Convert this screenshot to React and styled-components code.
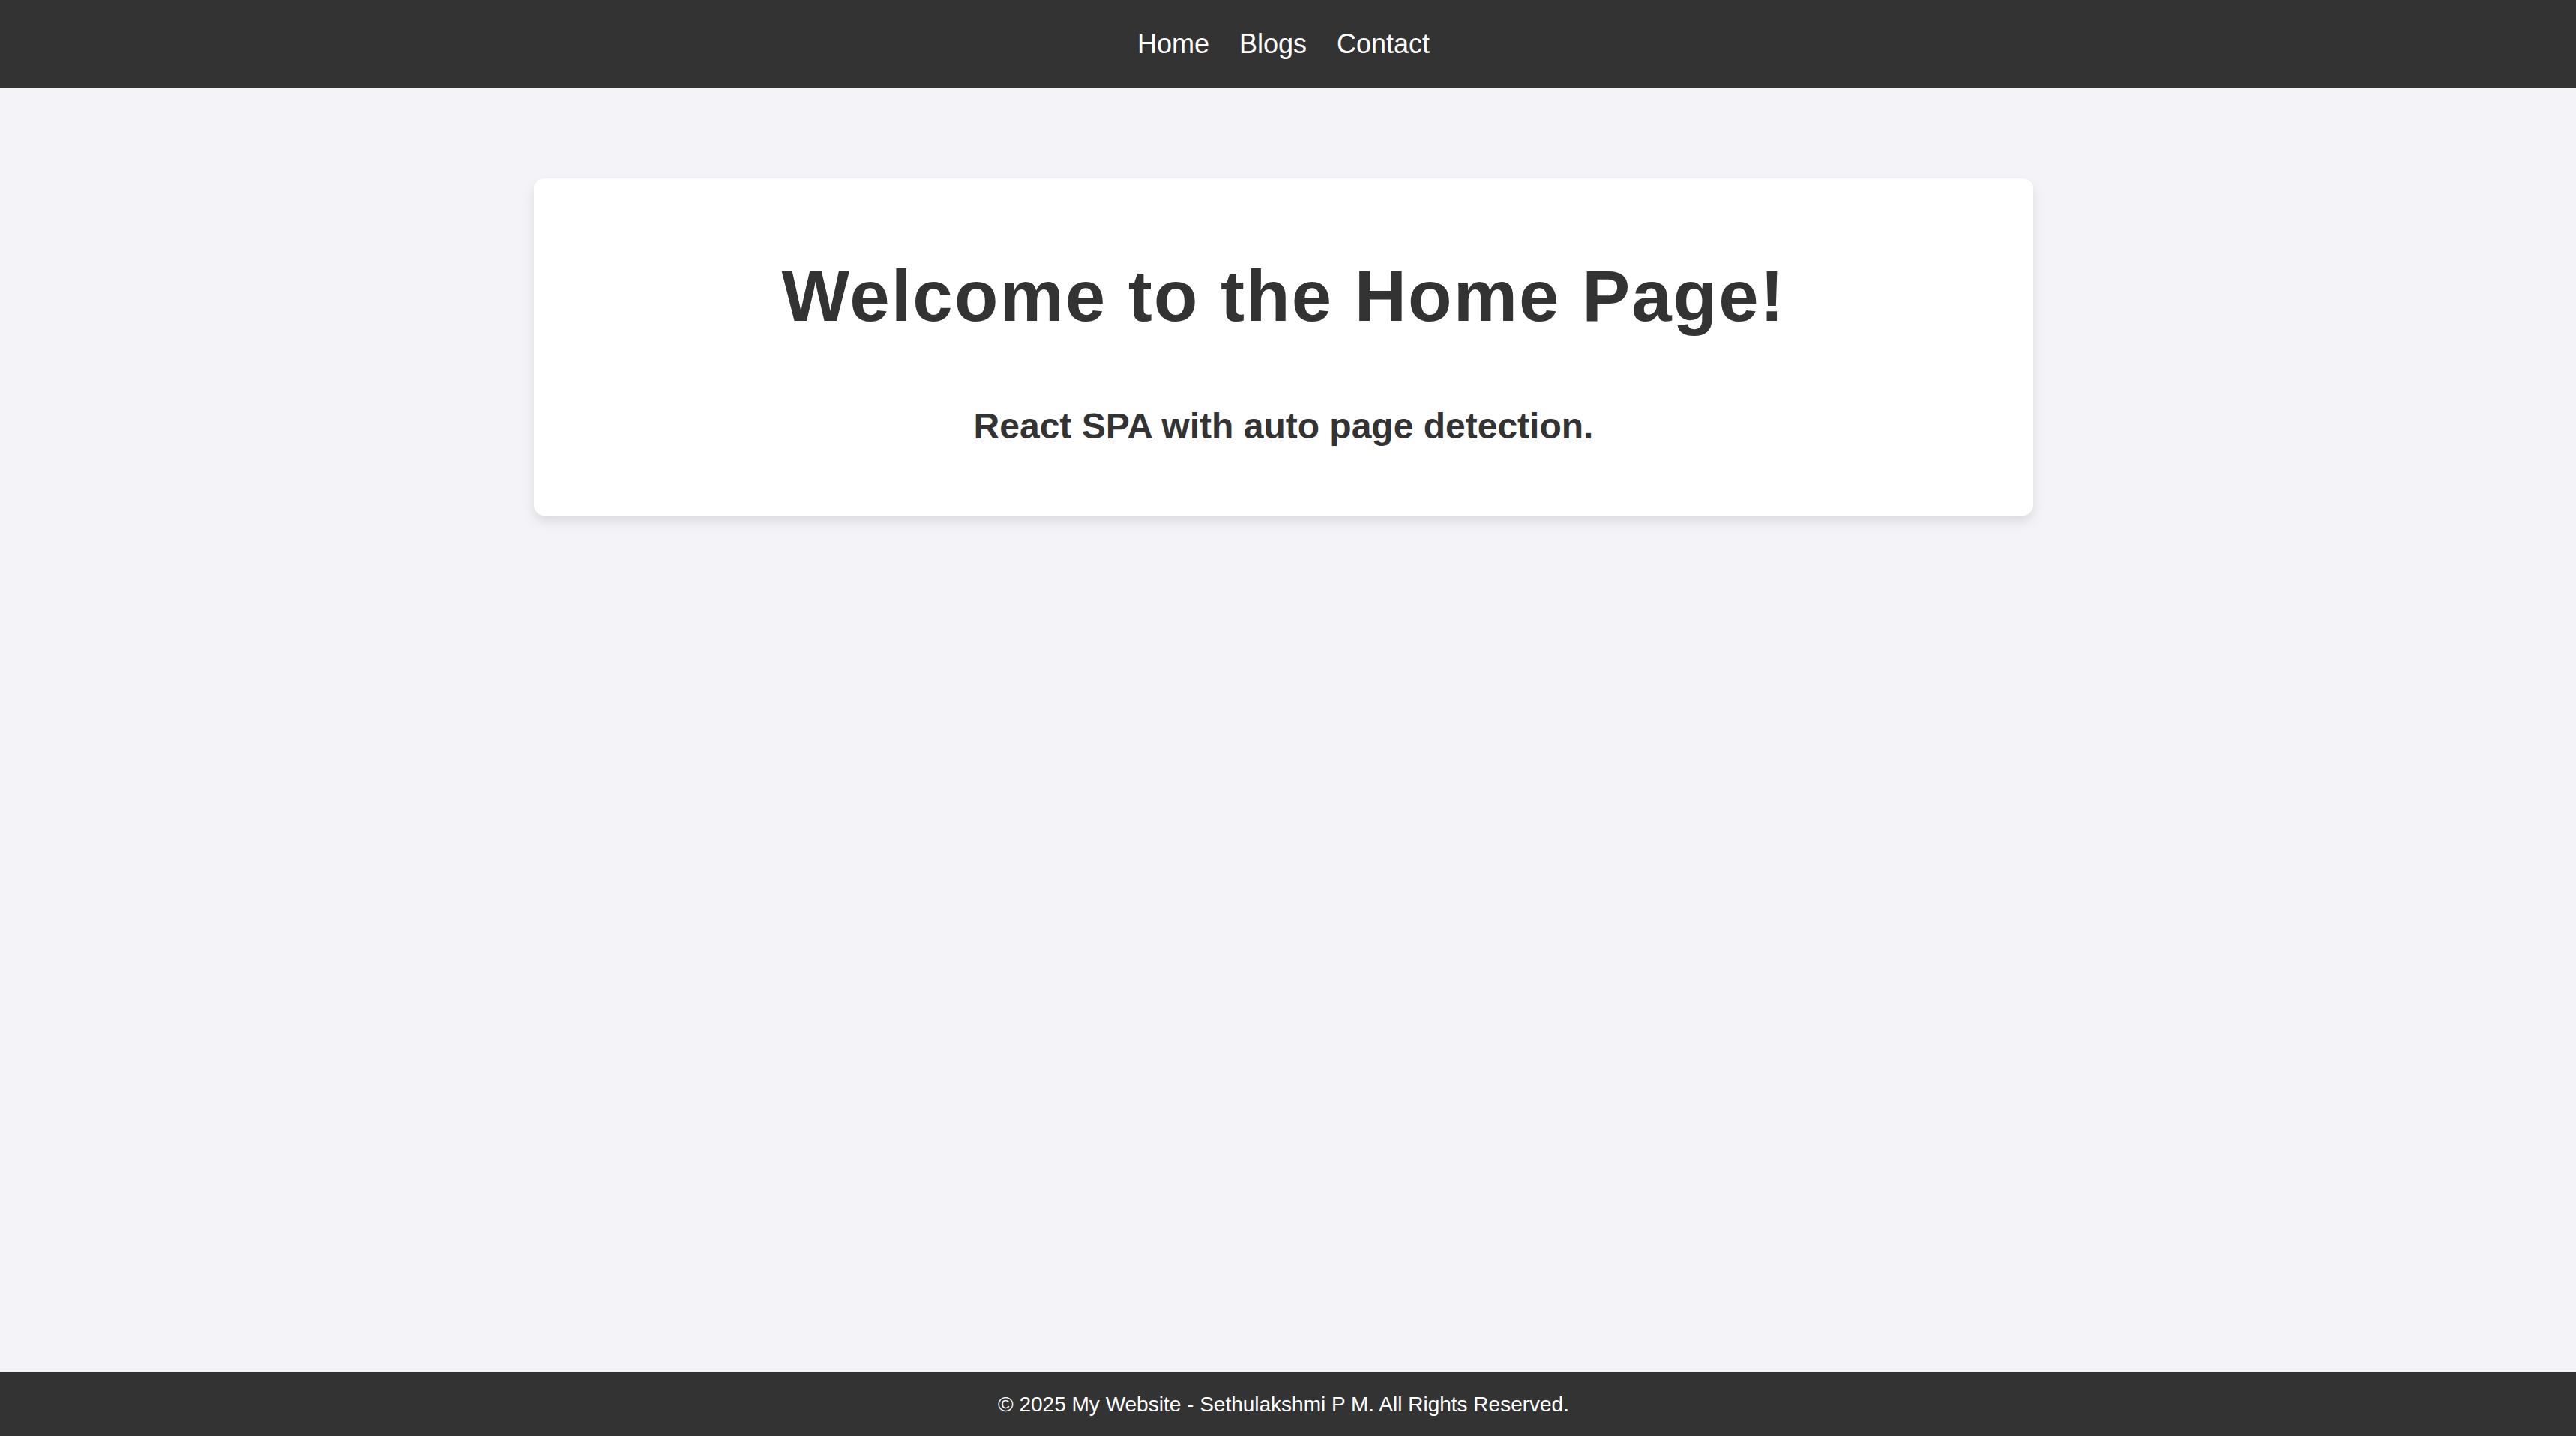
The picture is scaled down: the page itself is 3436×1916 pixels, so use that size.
import React from "react";
import styled, {createGlobalStyle} from "styled-components";

const GlobalStyle = createGlobalStyle`
  html, body {
    margin: 0;
    padding: 0;
  }
  body {
    background-color: #f4f4f8;
    font-family: "Liberation Sans", Arial, sans-serif;
    color: #333333;
  }
`;

const PageWrapper = styled('div')`
  display: flex;
  flex-direction: column;
  min-height: 100vh;
`;

const NavBar = styled('nav')`
  display: flex;
  justify-content: center;
  align-items: center;
  height: 118px;
  padding-right: 12px;
  background-color: #333333;
`;

const NavList = styled('ul')`
  display: flex;
  gap: 40px;
  margin: 0;
  padding: 0;
  list-style: none;
`;

const NavLink = styled('a')`
  color: #ffffff;
  font-size: 36px;
  line-height: 1.15;
  text-decoration: none;
  cursor: pointer;
`;

const Main = styled('main')`
  flex: 1;
  display: flex;
  justify-content: center;
  align-items: flex-start;
  padding: 120px 12px 0 0;
`;

const Card = styled('section')`
  width: 2000px;
  box-sizing: border-box;
  padding: 102px 40px 91px;
  background-color: #ffffff;
  border-radius: 14px;
  box-shadow: 0 8px 16px rgba(0, 0, 0, 0.1);
  text-align: center;
`;

const Title = styled('h1')`
  margin: 0 0 91px;
  font-size: 96px;
  line-height: 1.15;
  font-weight: bold;
  letter-spacing: 2px;
  color: #333333;
`;

const Subtitle = styled('h2')`
  margin: 0;
  font-size: 48px;
  line-height: 1.15;
  font-weight: bold;
  color: #333333;
`;

const Footer = styled('footer')`
  display: flex;
  justify-content: center;
  align-items: center;
  height: 85px;
  padding-right: 12px;
  background-color: #333333;
  color: #ffffff;
  font-size: 28px;
`;

const links = ['Home', 'Blogs', 'Contact'];

const App = () => {
    return (
        <PageWrapper>
            <GlobalStyle/>
            <NavBar>
                <NavList>
                    {links.map(link => (
                        <li key={link}><NavLink>{link}</NavLink></li>
                    ))}
                </NavList>
            </NavBar>
            <Main>
                <Card>
                    <Title>Welcome to the Home Page!</Title>
                    <Subtitle>React SPA with auto page detection.</Subtitle>
                </Card>
            </Main>
            <Footer>© 2025 My Website - Sethulakshmi P M. All Rights Reserved.</Footer>
        </PageWrapper>
    );
};

export default App;
